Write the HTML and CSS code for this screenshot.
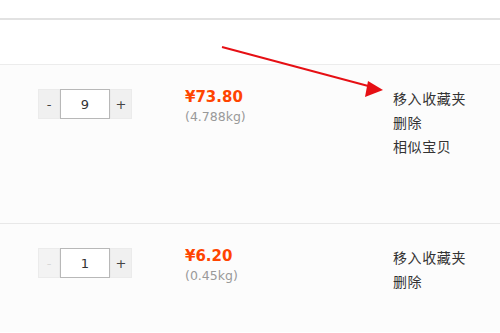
FILE: index.html
```html
<!DOCTYPE html>
<html>
	<head>
		<meta charset="utf-8" />
		<title>购物车</title>
		<link rel="stylesheet" href="styles.css">
	</head>
	<body>
		<div class="top"></div>
		<div class="head"></div>
		<ul class="list">
			<li class="item">
				<div class="amount">
					<a class="minus">-</a>
					<span class="num">9</span>
					<a class="plus">+</a>
				</div>
				<div class="price">
					<strong>¥73.80</strong>
					<p>(4.788kg)</p>
				</div>
				<div class="ops">
					<a href="#">移入收藏夹</a>
					<a href="#">删除</a>
					<a href="#">相似宝贝</a>
				</div>
			</li>
			<li class="item">
				<div class="amount">
					<a class="minus off">-</a>
					<span class="num">1</span>
					<a class="plus">+</a>
				</div>
				<div class="price">
					<strong>¥6.20</strong>
					<p>(0.45kg)</p>
				</div>
				<div class="ops">
					<a href="#">移入收藏夹</a>
					<a href="#">删除</a>
				</div>
			</li>
		</ul>
		<!--标注箭头-->
		<svg class="arrow" width="500" height="333" viewBox="0 0 500 333">
			<line x1="222" y1="47" x2="372" y2="87" stroke="#e60f14" stroke-width="2" />
			<polygon points="383,90 368,81 365,97" fill="#e60f14" />
		</svg>
	</body>
</html>
```
FILE: styles.css
```css
html,body,ul,p{padding: 0;margin: 0;}
body{background: #fff;font-family: "Noto Sans CJK SC", sans-serif;font-size: 14px;color: #333;position: relative;height: 333px;overflow: hidden;}

.top{height: 18px;border-bottom: 2px solid #e2e2e2;}
.head{height: 44px;border-bottom: 1px solid #ececec;}

.list{list-style: none;height: 268px;overflow: hidden;}
.item{display: flex;height: 134px;padding-top: 24px;background: #fcfcfc;border-bottom: 1px solid #e8e8e8;}
.item:last-child{height: 84px;border-bottom: 0;}

.amount{display: flex;height: 30px;margin-left: 38px;width: 147px;}
.amount a,.amount .num{display: block;height: 30px;line-height: 30px;text-align: center;font-family: "DejaVu Sans", sans-serif;font-size: 13px;box-sizing: border-box;}
.amount a{width: 22px;background: #f0f0f0;color: #444;border: 1px solid #ebebeb;cursor: pointer;}
.amount a.off{color: #d8d8d8;background: #f3f3f3;}
.amount .num{width: 50px;background: #fff;border: 1px solid #b8b8b8;color: #333;}

.price{width: 208px;font-family: "DejaVu Sans", sans-serif;}
.price strong{display: block;color: #f40;font-size: 15px;line-height: 16px;}
.price p{color: #999;font-size: 12.5px;line-height: 16px;margin-top: 4px;}

.ops{display: flex;flex-direction: column;margin-top: -3px;}
.ops a{color: #333;text-decoration: none;font-size: 14px;line-height: 24px;letter-spacing: 0.6px;}

.arrow{position: absolute;left: 0;top: 0;}
```
